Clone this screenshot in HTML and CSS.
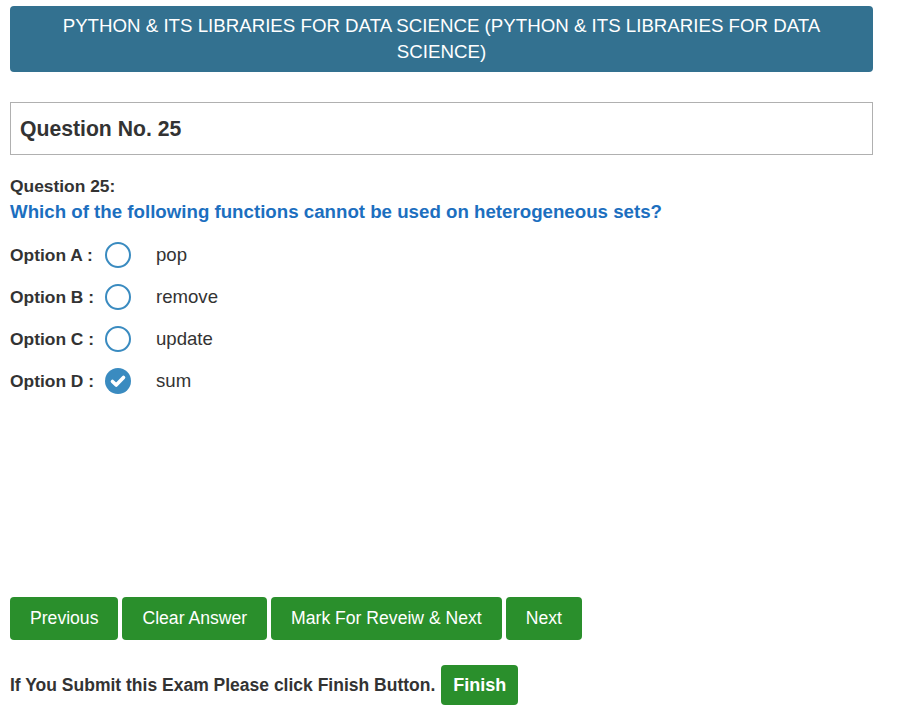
FILE: index.html
```html
<!DOCTYPE html>
<html>
<head>
<meta charset="utf-8">
<link rel="stylesheet" href="styles.css">
</head>
<body>
<div class="page">
  <div class="header">PYTHON &amp; ITS LIBRARIES FOR DATA SCIENCE (PYTHON &amp; ITS LIBRARIES FOR DATA SCIENCE)</div>
  <div class="qbox">Question No. 25</div>
  <div class="qlabel">Question 25:</div>
  <div class="qtext">Which of the following functions cannot be used on heterogeneous sets?</div>
  <div class="options">
    <div class="opt"><span class="olabel">Option A :</span><span class="radio"></span><span class="otext">pop</span></div>
    <div class="opt"><span class="olabel">Option B :</span><span class="radio"></span><span class="otext">remove</span></div>
    <div class="opt"><span class="olabel">Option C :</span><span class="radio"></span><span class="otext">update</span></div>
    <div class="opt"><span class="olabel">Option D :</span><span class="radio checked"><svg viewBox="0 0 26 26" width="26" height="26"><circle cx="13" cy="13" r="13" fill="#3a8bc0"/><path d="M7.5 13.5 L11.2 17 L18.5 9.5" fill="none" stroke="#fff" stroke-width="3.6" stroke-linecap="round" stroke-linejoin="round"/></svg></span><span class="otext">sum</span></div>
  </div>
  <div class="buttons">
    <button class="btn">Previous</button>
    <button class="btn">Clear Answer</button>
    <button class="btn">Mark For Reveiw &amp; Next</button>
    <button class="btn">Next</button>
  </div>
  <div class="finish-row">
    <span class="finish-text">If You Submit this Exam Please click Finish Button.</span>
    <button class="btn finish">Finish</button>
  </div>
</div>
</body>
</html>
```

FILE: styles.css
```css
* { box-sizing: border-box; }
body {
  margin: 0;
  font-family: "Liberation Sans", Arial, sans-serif;
  color: #333;
  background: #fff;
}
.page {
  padding: 6px 32px 0 10px;
}
.header {
  background: #337190;
  color: #fff;
  text-align: center;
  font-size: 18.7px;
  line-height: 26px;
  padding: 7px 30px;
  border-radius: 4px;
  height: 66px;
}
.qbox {
  margin-top: 30px;
  border: 1px solid #b0b0b0;
  height: 53px;
  padding: 0 9px;
  display: flex;
  align-items: center;
  font-size: 21.2px;
  font-weight: bold;
  color: #333;
}
.qlabel {
  margin-top: 21px;
  font-size: 17.4px;
  font-weight: bold;
  line-height: 20px;
}
.qtext {
  margin-top: 5px;
  font-size: 18.7px;
  font-weight: bold;
  color: #1c6fbf;
  line-height: 22px;
}
.options {
  margin-top: 19px;
  display: flex;
  flex-direction: column;
  gap: 16px;
}
.opt {
  display: flex;
  align-items: center;
  height: 26px;
}
.olabel {
  font-size: 17.4px;
  font-weight: bold;
  width: 95px;
}
.radio {
  width: 26px;
  height: 26px;
  border: 2px solid #3a8bc0;
  border-radius: 50%;
  display: inline-block;
}
.radio.checked {
  border: none;
}
.radio svg { display: block; }
.otext {
  margin-left: 25px;
  font-size: 18.6px;
  color: #333;
}
.buttons {
  margin-top: 203px;
  display: flex;
  gap: 4px;
}
.btn {
  background: #2a8f2c;
  color: #fff;
  border: none;
  border-radius: 4px;
  font-family: "Liberation Sans", Arial, sans-serif;
  font-size: 17.6px;
  height: 43px;
  padding: 0 20px;
}
.finish-row {
  margin-top: 25px;
  display: flex;
  align-items: center;
  gap: 6px;
}
.finish-text {
  font-size: 17.5px;
  font-weight: bold;
}
.btn.finish {
  font-weight: bold;
  font-size: 18px;
  height: 40px;
  padding: 0 12px;
}
```
